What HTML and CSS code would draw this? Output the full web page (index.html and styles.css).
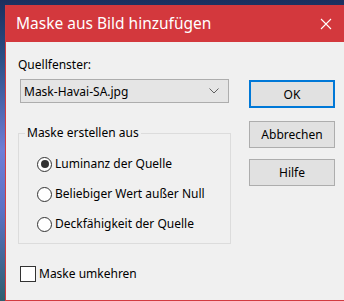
FILE: index.html
```html
<!DOCTYPE html>
<html>
<head>
    <title>Maske aus Bild hinzufügen</title>
    <link rel="stylesheet" href="styles.css">
</head>
<body>
    <div class="dialog">
        <div class="titlebar">
            <span class="title">Maske aus Bild hinzufügen</span>
            <svg class="close" width="12" height="12" viewBox="0 0 12 12">
                <path d="M1 1 L11 11 M11 1 L1 11" stroke="#fff" stroke-width="1.1" fill="none"/>
            </svg>
        </div>

        <div class="content">
            <div class="left">
                <div class="label">Quellfenster:</div>
                <div class="combo">
                    <span>Mask-Havai-SA.jpg</span>
                    <svg width="10" height="6" viewBox="0 0 10 6">
                        <path d="M0.5 0.5 L5 5 L9.5 0.5" stroke="#606060" fill="none"/>
                    </svg>
                </div>

                <fieldset class="group">
                    <legend>Maske erstellen aus</legend>
                    <div class="option"><span class="radio checked"></span>Luminanz der Quelle</div>
                    <div class="option"><span class="radio"></span>Beliebiger Wert außer Null</div>
                    <div class="option"><span class="radio"></span>Deckfähigkeit der Quelle</div>
                </fieldset>

                <div class="check-row"><span class="checkbox"></span>Maske umkehren</div>
            </div>

            <div class="buttons">
                <div class="btn default">OK</div>
                <div class="btn">Abbrechen</div>
                <div class="btn">Hilfe</div>
            </div>
        </div>
    </div>
</body>
</html>
```

FILE: styles.css
```css
html, body { margin: 0; height: 301px; overflow: hidden; }
body {
    font-family: "Noto Sans", "Open Sans", sans-serif;
    font-size: 12px;
    color: #000;
    background: linear-gradient(to bottom, #1b2f5e 0%, #2c4f86 20%, #6f7dd6 50%, #5b70c4 70%, #2e5f6e 100%);
}
.dialog {
    margin: 5px 0 0 5px;
    width: 345px;
    height: 295px;
    border-left: 1px solid #d23b40;
    border-bottom: 1px solid #d23b40;
    background: #f0f0f0;
    display: flex;
    flex-direction: column;
}
.titlebar {
    height: 37px;
    background: #d3383d;
    color: #fff;
    display: flex;
    align-items: center;
    padding-left: 10px;
    padding-right: 12px;
    justify-content: space-between;
}
.title { font-size: 15.5px; margin-top: -1px; }
.close { margin-right: 7px; margin-top: 0; }

.content { display: flex; padding: 15px 0 0 12px; gap: 18px; }
.left { width: 213px; }
.label { line-height: 16px; }
.combo {
    margin: 6px 0 0 2px;
    width: 209px;
    height: 24px;
    box-sizing: border-box;
    border: 1px solid #adadad;
    background: #e5e5e5;
    display: flex;
    align-items: center;
    justify-content: space-between;
    padding: 0 9px 0 3px;
}

.group {
    margin: 22px 0 0 0;
    padding: 9px 6px 10px 18px;
    border: 1px solid #dcdcdc;
    width: 213px;
    box-sizing: border-box;
    height: 119px;
}
.group legend { padding: 0 2px; margin-left: -12px; line-height: 16px; }
.option { display: flex; align-items: center; height: 30px; line-height: 16px; }
.option:first-of-type { margin-top: -1px; }
.radio {
    width: 15px;
    height: 15px;
    box-sizing: border-box;
    border: 1px solid #333;
    border-radius: 50%;
    background: #fff;
    margin-right: 3px;
    display: flex;
    align-items: center;
    justify-content: center;
}
.radio.checked::after {
    content: '';
    width: 8px;
    height: 8px;
    border-radius: 50%;
    background: #333;
}

.check-row { display: flex; align-items: center; margin: 22px 0 0 2px; line-height: 16px; }
.checkbox {
    width: 16px;
    height: 16px;
    box-sizing: border-box;
    border: 1px solid #333;
    background: #fff;
    margin-right: 3px;
}

.buttons { display: flex; flex-direction: column; gap: 11px; padding-top: 23px; }
.btn {
    width: 86px;
    height: 27px;
    box-sizing: border-box;
    border: 1px solid #adadad;
    background: #e1e1e1;
    display: flex;
    align-items: center;
    justify-content: center;
}
.btn.default { border: 2px solid #0078d7; height: 28px; margin-bottom: 2px; }
```
